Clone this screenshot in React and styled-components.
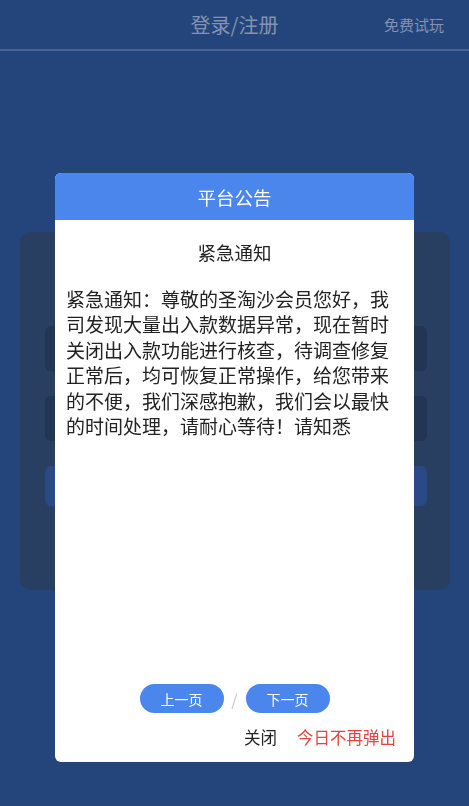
import React from 'react';
import styled, { createGlobalStyle } from 'styled-components';

const GlobalStyle = createGlobalStyle`
  html, body {
    margin: 0;
    padding: 0;
    background: #24457c;
  }
  body {
    font-family: "Noto Sans CJK SC", "Noto Sans", sans-serif;
  }
`;

const Page = styled.div`
  width: 469px;
  height: 806px;
  background: #24457c;
  overflow: hidden;
`;

const TopBar = styled.header`
  position: relative;
  height: 49px;
  display: flex;
  align-items: center;
  justify-content: center;
  border-bottom: 2px solid #4b6390;
`;

const PageTitle = styled.h1`
  margin: 0;
  font-size: 20px;
  font-weight: 400;
  color: #8393b0;
`;

const TrialLink = styled.span`
  position: absolute;
  right: 25px;
  top: 14px;
  font-size: 15px;
  color: #8393b0;
`;

const LoginCard = styled.div`
  margin: 181px 19px 0 20px;
  height: 358px;
  background: #293f61;
  border-radius: 10px;
  padding: 94px 23px 0 25px;
  box-sizing: border-box;
  display: flex;
  flex-direction: column;
  gap: 25px;
`;

const Field = styled.div`
  height: ${p => (p.$button ? 40 : 45)}px;
  border-radius: 6px;
  background: ${p => (p.$button ? '#2a4a86' : '#223555')};
`;

const Overlay = styled.div`
  position: fixed;
  inset: 0;
  display: flex;
  justify-content: center;
  align-items: flex-start;
  padding-top: 173px;
`;

const Modal = styled.div`
  width: 359px;
  height: 589px;
  background: #ffffff;
  border-radius: 6px;
  overflow: hidden;
  display: flex;
  flex-direction: column;
`;

const ModalHeader = styled.div`
  height: 47px;
  background: #4a86ec;
  color: #ffffff;
  font-size: 18.5px;
  display: flex;
  align-items: center;
  justify-content: center;
`;

const ModalBody = styled.div`
  flex: 1;
  padding: 20px 11px 0 11px;
  display: flex;
  flex-direction: column;
`;

const NoticeTitle = styled.div`
  text-align: center;
  font-size: 18.5px;
  line-height: 24px;
  color: #222222;
`;

const NoticeText = styled.p`
  margin: 22px 0 0;
  font-size: 19px;
  line-height: 25.4px;
  color: #222222;
  word-break: break-all;
`;

const Pager = styled.div`
  margin-top: auto;
  display: flex;
  justify-content: center;
  align-items: center;
  gap: 6px;
`;

const PageButton = styled.button`
  width: 84px;
  height: 29px;
  border: none;
  border-radius: 15px;
  background: #4a86ec;
  color: #ffffff;
  font-family: inherit;
  font-size: 14px;
  padding: 0;
`;

const Slash = styled.span`
  color: #c8c8c8;
  font-size: 16px;
  width: 10px;
  text-align: center;
`;

const Footer = styled.div`
  display: flex;
  justify-content: flex-end;
  align-items: center;
  gap: 20px;
  height: 24px;
  margin: 12px 7px 13px 0;
  font-size: 16.5px;
`;

const FooterLink = styled.span`
  color: ${p => (p.$danger ? '#e2463f' : '#222222')};
`;

export default function App() {
  return (
    <>
      <GlobalStyle />
      <Page>
        <TopBar>
          <PageTitle>登录/注册</PageTitle>
          <TrialLink>免费试玩</TrialLink>
        </TopBar>
        <LoginCard>
          <Field />
          <Field />
          <Field $button />
        </LoginCard>
      </Page>
      <Overlay>
        <Modal>
          <ModalHeader>平台公告</ModalHeader>
          <ModalBody>
            <NoticeTitle>紧急通知</NoticeTitle>
            <NoticeText>
              紧急通知：尊敬的圣淘沙会员您好，我司发现大量出入款数据异常，现在暂时关闭出入款功能进行核查，待调查修复正常后，均可恢复正常操作，给您带来的不便，我们深感抱歉，我们会以最快的时间处理，请耐心等待！请知悉
            </NoticeText>
            <Pager>
              <PageButton>上一页</PageButton>
              <Slash>/</Slash>
              <PageButton>下一页</PageButton>
            </Pager>
            <Footer>
              <FooterLink>关闭</FooterLink>
              <FooterLink $danger>今日不再弹出</FooterLink>
            </Footer>
          </ModalBody>
        </Modal>
      </Overlay>
    </>
  );
}
